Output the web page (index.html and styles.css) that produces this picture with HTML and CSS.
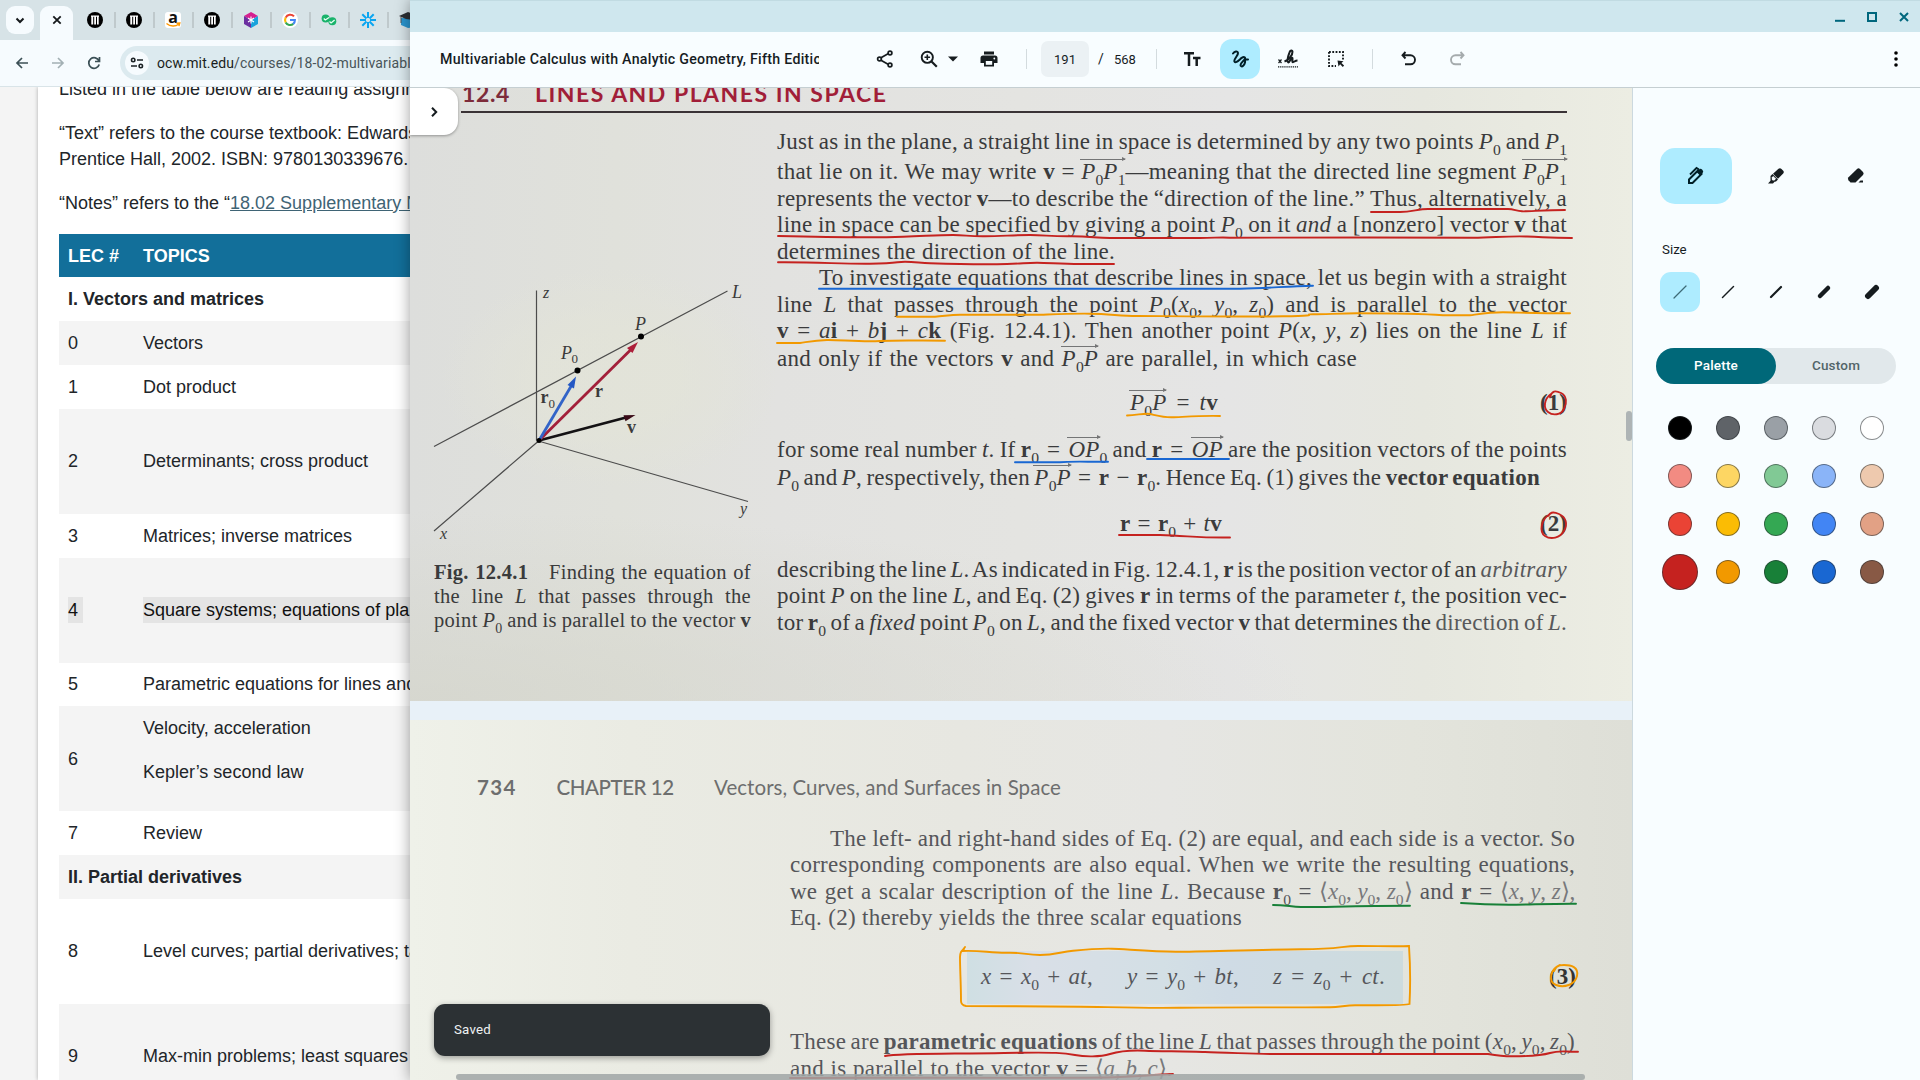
FILE: index.html
```html
<!DOCTYPE html>
<html lang="en">
<head>
<meta charset="utf-8">
<title>Multivariable Calculus with Analytic Geometry, Fifth Edition</title>
<link rel="stylesheet" href="styles.css">
</head>
<body>
<div class="desktop">
  <section class="browser">
    <div class="tabstrip">
      <span class="tab-search"><svg width="28" height="28" viewBox="0 0 28 28"><path d="M10.5 12.5l3.5 3.5 3.5-3.5" fill="none" stroke="#15191b" stroke-width="2"/></svg></span>
      <span class="tab-active"><svg width="33" height="34" viewBox="0 0 33 34"><path d="M13.3 10.3l7.4 7.4M20.700 10.300l-7.400 7.400" stroke="#15191b" stroke-width="1.800"/></svg></span>
      <span class="fav"><svg width="16" height="16" viewBox="0 0 16 16"><circle cx="8" cy="8" r="8"/><path d="M4 3.500h8v1.200H4zM4.300 4h1.900v8.500H4.300zM7.200 4h1.800v8.500H7.200zM10 4h1.700v8.500H10z" fill="#fff"/></svg></span>
      <span class="fav"><svg width="16" height="16" viewBox="0 0 16 16"><circle cx="8" cy="8" r="8"/><path d="M4 3.500h8v1.200H4zM4.300 4h1.900v8.500H4.300zM7.200 4h1.800v8.500H7.200zM10 4h1.700v8.500H10z" fill="#fff"/></svg></span>
      <span class="fav amazon"><b>a</b><svg width="16" height="16" viewBox="0 0 16 16"><path d="M1.500 11.500c4 3.200 9 3.200 12 .8M11.500 11.300l3.300-.2-.9 3" fill="none" stroke="#f90" stroke-width="1.400"/></svg></span>
      <span class="fav"><svg width="16" height="16" viewBox="0 0 16 16"><circle cx="8" cy="8" r="8"/><path d="M4 3.500h8v1.200H4zM4.300 4h1.900v8.500H4.300zM7.200 4h1.800v8.500H7.200zM10 4h1.700v8.500H10z" fill="#fff"/></svg></span>
      <span class="fav"><svg width="16" height="16" viewBox="0 0 16 16"><path d="M8 0l7 4-7 4-7-4z" fill="#d6208f"/><path d="M1 4l7 4v8l-7-4z" fill="#6b2fa0"/><path d="M15 4L8 8v8l7-4z" fill="#19a3dc"/><path d="M8 4.500v7M5 6l6 4M11 6l-6 4" stroke="#fff" stroke-width="1.100"/></svg></span>
      <span class="fav round"><svg width="16" height="16" viewBox="0 0 16 16"><g fill="none" stroke-width="2.100"><path d="M12 4.400A5 5 0 0 0 3.700 5.600" stroke="#ea4335"/><path d="M3.700 5.600a5 5 0 0 0 0 4.800" stroke="#fbbc05"/><path d="M3.700 10.400a5 5 0 0 0 7.600 1.500" stroke="#34a853"/><path d="M8 8h4.900a5 5 0 0 1-1.700 3.900" stroke="#4285f4"/></g></svg></span>
      <span class="fav"><svg width="16" height="16" viewBox="0 0 16 16"><circle cx="4.600" cy="6.500" r="4" fill="#19b36b"/><circle cx="11.300" cy="9.300" r="4" fill="#19b36b"/><path d="M2.800 6.500l1.500 1.500L8 5.500M8.500 9.500l1.600 1.500 3.500-3" fill="none" stroke="#e9fff3" stroke-width="1.300"/></svg></span>
      <span class="fav"><svg width="16" height="16" viewBox="0 0 16 16"><path d="M8 0v6M8 10v6M0 8h6M10 8h6M2.300 2.300l4.200 4.200M9.500 9.500l4.200 4.200M13.700 2.300L9.500 6.500M6.500 9.500l-4.200 4.200" stroke="#0aa5f0" stroke-width="2"/></svg></span>
      <span class="fav"><svg width="16" height="16" viewBox="0 0 16 16"><path d="M2 6h14v9l-7 1-7-3z" fill="#2a95cf"/><path d="M0 4l9-4 7 3v5L7 7z" fill="#2c2f33"/><path d="M2 5v6" stroke="#555" stroke-width="1"/></svg></span>
    </div>
    <div class="navbar">
      <svg width="16" height="16" viewBox="0 0 16 16"><path d="M14 8H3M8 3L3 8l5 5" fill="none" stroke="#3c5056" stroke-width="1.700"/></svg>
      <svg width="16" height="16" viewBox="0 0 16 16"><path d="M2 8h11M8 3l5 5-5 5" fill="none" stroke="#a3b0b4" stroke-width="1.700"/></svg>
      <svg width="16" height="16" viewBox="0 0 16 16"><path d="M13 6A5.300 5.300 0 1 0 13.200 9.500M13.500 2v4.500H9" fill="none" stroke="#3c5056" stroke-width="1.700"/></svg>
      <div class="omnibox">
        <span class="site-info"><svg width="14" height="14" viewBox="0 0 14 14"><g fill="none" stroke="#1b2225" stroke-width="1.600"><circle cx="3.200" cy="4" r="1.700"/><path d="M7 4h6M1 10h6"/><circle cx="10.800" cy="10" r="1.700"/></g></svg></span>
        <span class="url"><b>ocw.mit.edu</b>/courses/18-02-multivariable-calculus</span>
      </div>
    </div>
    <main class="site">
      <div class="sheet">
        <p>Listed in the table below are reading assignments</p>
        <p>“Text” refers to the course textbook: Edwards, Henry<br>Prentice Hall, 2002. ISBN: 9780130339676.</p>
        <p>“Notes” refers to the “<a>18.02 Supplementary Notes</a></p>
        <div class="topics">
          <div class="row head"><span>LEC #</span><span>TOPICS</span></div>
          <div class="row group"><span>I. Vectors and matrices</span></div>
          <div class="row odd"><span>0</span><span>Vectors</span></div>
          <div class="row"><span>1</span><span>Dot product</span></div>
          <div class="row odd tall"><span>2</span><span>Determinants; cross product</span></div>
          <div class="row"><span>3</span><span>Matrices; inverse matrices</span></div>
          <div class="row odd tall"><span><mark>4&nbsp;</mark></span><span><mark>Square systems; equations of planes</mark></span></div>
          <div class="row"><span>5</span><span>Parametric equations for lines and curves</span></div>
          <div class="row odd tall two"><span>6</span><div><p>Velocity, acceleration</p><p>Kepler’s second law</p></div></div>
          <div class="row"><span>7</span><span>Review</span></div>
          <div class="row odd group"><span>II. Partial derivatives</span></div>
          <div class="row tall"><span>8</span><span>Level curves; partial derivatives; tangent plane</span></div>
          <div class="row odd tall"><span>9</span><span>Max-min problems; least squares</span></div>
        </div>
      </div>
    </main>
  </section>

  <section class="viewer">
    <div class="titlebar">
      <svg width="12" height="12" viewBox="0 0 12 12"><path d="M1 9.800h10" stroke="#00677d" stroke-width="2"/></svg>
      <svg width="12" height="12" viewBox="0 0 12 12"><path d="M2 2h8v8H2z" fill="none" stroke="#00677d" stroke-width="2"/></svg>
      <svg width="12" height="12" viewBox="0 0 12 12"><path d="M2 2l8 8M10 2l-8 8" stroke="#00677d" stroke-width="2"/></svg>
    </div>
    <div class="toolbar">
      <h1>Multivariable Calculus with Analytic Geometry, Fifth Edition</h1>
      <span class="ic share"><svg width="20" height="20" viewBox="0 0 20 20"><g fill="none" stroke="#161c1f" stroke-width="1.700"><path d="M5.500 9l8-4.500M5.500 11l8 4.500"/><circle cx="15" cy="4" r="1.900"/><circle cx="15" cy="16" r="1.900"/><circle cx="4.500" cy="10" r="1.900"/></g></svg></span>
      <span class="ic zoom"><svg width="20" height="20" viewBox="0 0 20 20"><g fill="none" stroke="#161c1f"><circle cx="8.300" cy="8.300" r="5.600" stroke-width="1.900"/><path d="M12.500 12.500l5.300 5.300" stroke-width="2.200"/><path d="M8.300 5.500v5.600M5.500 8.300h5.600" stroke-width="1.600"/></g></svg></span>
      <span class="ic caret"><svg width="10" height="6" viewBox="0 0 10 6"><path d="M0 .5h10L5 5.500z" fill="#161c1f"/></svg></span>
      <span class="ic print"><svg width="20" height="20" viewBox="0 0 20 20"><path d="M5 2.500h10v3H5zM4 6.500h12a2.500 2.500 0 0 1 2.500 2.500v5H15v3.500H5V14H1.500V9A2.500 2.500 0 0 1 4 6.500z" fill="#161c1f"/><path d="M6.800 12h6.400v3.800H6.800z" fill="#f8fdff"/><circle cx="15.300" cy="9.500" r=".9" fill="#f8fdff"/></svg></span>
      <i class="sep s1"></i>
      <span class="pageno">191</span><span class="slash">/</span><span class="total">568</span>
      <i class="sep s2"></i>
      <span class="ic tt"><svg width="20" height="18" viewBox="0 0 20 18"><path d="M2 3.300h10M7 3.300V16M11 8h7.500M14.700 8v8" fill="none" stroke="#161c1f" stroke-width="2.500"/></svg></span>
      <span class="draw"><svg width="22" height="22" viewBox="0 0 22 22"><path d="M4 5.500C5.500 3.500 8.700 2.500 9 5s-4.500 6-3.600 8.500c1 2.500 4.600-1.500 7.300-3.600 2.500-1.800 4.500-.5 2.800 1.600-2 2.600-4.800 4.200-3.800 6.200 1.300 2 3.800-.8 4.300-3.200.3-1.400-.4-2.300.8-3H19" fill="none" stroke="#001f27" stroke-width="2" stroke-linecap="round"/></svg></span>
      <span class="ic sign"><svg width="22" height="20" viewBox="0 0 22 20"><path d="M1.500 10.500l3 3.500M4.500 10.500l-3 3.500" stroke="#161c1f" stroke-width="1.200"/><path d="M7.500 12.500c4-1.500 8.200-6.500 8-9.800-.1-2-2.300-1.500-3 .7-1.300 3.400-2.800 9.300-1.300 10 1.600.3 2.600-4.900 4-4.700 1.300.4-.8 4.300.7 4.500 1.400 0 2-1.700 4.600-1.700" fill="none" stroke="#161c1f" stroke-width="2"/><path d="M1 17.800h20" stroke="#161c1f" stroke-width="1.200" stroke-dasharray="1.300 .8"/></svg></span>
      <span class="ic select"><svg width="18" height="18" viewBox="0 0 18 18"><path d="M2 2h14v8M2 2v14h7" fill="none" stroke="#161c1f" stroke-width="1.900" stroke-dasharray="1.800 1.500"/><path d="M10.500 10.500l6 .8-2.100 1.600 2.700 2.700-1.300 1.300-2.700-2.700-1.600 2.200z" fill="#161c1f"/></svg></span>
      <i class="sep s3"></i>
      <span class="ic undo"><svg width="16" height="16" viewBox="0 0 16 16"><path d="M4.500 1L1.500 4.300l3 3.200M1.800 4.300h7.700a4.200 4.200 0 0 1 0 9H4" fill="none" stroke="#161c1f" stroke-width="1.900"/></svg></span>
      <span class="ic redo"><svg width="16" height="16" viewBox="0 0 16 16"><path d="M11.500 1l3 3.300-3 3.200M14.200 4.300H6.500a4.200 4.200 0 0 0 0 9H12" fill="none" stroke="#a5abad" stroke-width="1.900"/></svg></span>
      <span class="ic more"><svg width="6" height="18" viewBox="0 0 6 18"><circle cx="3" cy="3" r="1.800"/><circle cx="3" cy="9" r="1.800"/><circle cx="3" cy="15" r="1.800"/></svg></span>
    </div>
    <div class="work">
      <div class="canvas">
        <article class="page p733">
          <h2><span>12.4</span><span>LINES AND PLANES IN SPACE</span></h2>
          <div class="rule"></div>
          <div class="cols">
            <figure>
              <svg class="plot" width="317" height="276" viewBox="434 284 317 276">
                <g stroke="#4c4c4c" stroke-width="1.200" fill="none"><path d="M536.500 291V441M434 447L727.500 291.500M538 442L434 531.500M540 442L748 502"/></g>
                <path d="M539 441L626 418" stroke="#141214" stroke-width="2.800"/><path d="M635.500 415.500l-12 .200 2 6z" fill="#3a0c18"/>
                <path d="M539 441L632 349" stroke="#a3203a" stroke-width="2.800"/><path d="M638 342.500l-11 6 5.500 5z" fill="#ad1f3a"/>
                <path d="M539 441L571.500 386" stroke="#3264c8" stroke-width="2.800"/><path d="M576 377l-8.500 8.500 6.500 3.500z" fill="#2458c4"/>
                <circle cx="539" cy="441" r="2.500"/><circle cx="577.500" cy="371" r="3"/><circle cx="641" cy="337" r="3"/>
                <g class="lab"><text class="m" x="543" y="298">z</text><text x="732" y="298">L</text><text x="635" y="330">P</text><text x="561" y="359">P</text><text class="m" x="740" y="514">y</text><text class="m" x="440" y="539">x</text></g>
                <g class="lab up"><text class="s" x="571.500" y="363">0</text><text class="s" x="548.500" y="408">0</text><text class="b" x="540.500" y="403">r</text><text class="b" x="595" y="397">r</text><text class="b" x="627" y="433">v</text></g>
              </svg>
              <figcaption>
                <p><b>Fig. 12.4.1</b>&emsp;Finding the equation of</p>
                <p>the line <i>L</i> that passes through the</p>
                <p>point <i>P</i><sub>0</sub> and is parallel to the vector <b>v</b></p>
              </figcaption>
            </figure>
            <div class="prose">
              <p class="l">Just as in the plane, a straight line in space is determined by any two points <i>P</i><sub>0</sub> and <i>P</i><sub>1</sub></p>
              <p class="l g4">that lie on it. We may write <b>v</b> = <span class="vec"><i>P</i><sub>0</sub><i>P</i><sub>1</sub></span>—meaning that the directed line segment <span class="vec"><i>P</i><sub>0</sub><i>P</i><sub>1</sub></span></p>
              <p class="l">represents the vector <b>v</b>—to describe the “direction of the line.” Thus, alternatively, a</p>
              <p class="l">line in space can be specified by giving a point <i>P</i><sub>0</sub> on it <i>and</i> a [nonzero] vector <b>v</b> that</p>
              <p class="l w338">determines the direction of the line.</p>
              <p class="l indent">To investigate equations that describe lines in space, let us begin with a straight</p>
              <p class="l">line <i>L</i> that passes through the point <i>P</i><sub>0</sub>(<i>x</i><sub>0</sub>, <i>y</i><sub>0</sub>, <i>z</i><sub>0</sub>) and is parallel to the vector</p>
              <p class="l"><b>v</b> = <i>a</i><b>i</b> + <i>b</i><b>j</b> + <i>c</i><b>k</b> (Fig. 12.4.1). Then another point <i>P</i>(<i>x</i>, <i>y</i>, <i>z</i>) lies on the line <i>L</i> if</p>
              <p class="l g2 w580">and only if the vectors <b>v</b> and <span class="vec"><i>P</i><sub>0</sub><i>P</i></span> are parallel, in which case</p>
              <div class="eq e1"><p class="l"><span class="vec"><i>P</i><sub>0</sub><i>P</i></span> = <i>t</i><b>v</b></p><b class="no">(1)</b></div>
              <p class="l g20">for some real number <i>t</i>. If <span class="math"><b>r</b><sub>0</sub> = <span class="vec"><i>OP</i></span></span><sub>0</sub> and <span class="math"><b>r</b> = <span class="vec"><i>OP</i></span></span> are the position vectors of the points</p>
              <p class="l g2 w763"><i>P</i><sub>0</sub> and <i>P</i>, respectively, then <span class="math"><span class="vec"><i>P</i><sub>0</sub><i>P</i></span> = <b>r</b> − <b>r</b><sub>0</sub></span>. Hence Eq. (1) gives the <b>vector equation</b></p>
              <div class="eq e2"><p class="l"><b>r</b> = <b>r</b><sub>0</sub> + <i>t</i><b>v</b></p><b class="no">(2)</b></div>
              <p class="l g18">describing the line <i>L</i>. As indicated in Fig. 12.4.1, <b>r</b> is the position vector of an <i class="faded">arbitrary</i></p>
              <p class="l">point <i>P</i> on the line <i>L</i>, and Eq. (2) gives <b>r</b> in terms of the parameter <i>t</i>, the position vec-</p>
              <p class="l">tor <b>r</b><sub>0</sub> of a <i>fixed</i> point <i>P</i><sub>0</sub> on <i>L</i>, and the fixed vector <b>v</b> that determines the <span class="faded">direction of <i>L</i>.</span></p>
            </div>
          </div>
        </article>
        <article class="page p734">
          <header><b>734</b><strong>CHAPTER 12</strong><span>Vectors, Curves, and Surfaces in Space</span></header>
          <div class="prose">
            <p class="l indent">The left- and right-hand sides of Eq. (2) are equal, and each side is a vector. So</p>
            <p class="l">corresponding components are also equal. When we write the resulting equations,</p>
            <p class="l">we get a scalar description of the line <i>L</i>. Because <b>r</b><sub>0</sub> = <span class="pale">⟨<i>x</i><sub>0</sub>, <i>y</i><sub>0</sub>, <i>z</i><sub>0</sub>⟩</span> and <b>r</b> = <span class="pale">⟨<i>x</i>, <i>y</i>, <i>z</i>⟩,</span></p>
            <p class="l w452">Eq. (2) thereby yields the three scalar equations</p>
            <div class="eq e3">
              <div class="boxed"><p class="l"><i>x</i> = <i>x</i><sub>0</sub> + <i>at</i>,</p><p class="l"><i>y</i> = <i>y</i><sub>0</sub> + <i>bt</i>,</p><p class="l"><i>z</i> = <i>z</i><sub>0</sub> + <i>ct</i>.</p></div>
              <b class="no">(3)</b>
            </div>
            <p class="l g25">These are <b>parametric equations</b> of the line <i>L</i> that passes through the point (<i>x</i><sub>0</sub>, <i>y</i><sub>0</sub>, <i>z</i><sub>0</sub>)</p>
            <p class="l w380">and is parallel to the vector <b>v</b> = <span class="pale">⟨<i>a</i>, <i>b</i>, <i>c</i>⟩.</span></p>
          </div>
        </article>
        <svg class="ink" width="1222" height="992" viewBox="410 88 1222 992">
          <g stroke="#c5221f">
            <path d="M1371 212H1400C1412 212 1418 209 1428 209H1508C1514 209 1516 211 1522 211.300S1545 210 1565 210"/>
            <path d="M778 236C820 237 870 238 903 236.700S940 235 953 235 968 236.500 985 236.300 1015 235 1030 235 1050 236.500 1070 236.300 1095 238 1110 238H1200C1215 238 1220 237 1230 237.700S1400 237 1473 237.700C1500 237 1510 236 1527 236.500S1550 238 1572 238"/>
            <path d="M778 262.300C820 262 840 264 870 263.700S895 261.700 905 261.700 920 263 930 263.300 990 264.500 1007 264 1025 262.700 1037 262.700 1060 264 1080 264H1114"/>
            <path d="M1119 535H1160C1190 536 1200 538 1230 537.500"/>
            <path d="M885 1056C900 1053 950 1054 1004 1053S1065 1053 1075 1055 1100 1057 1110 1054 1130 1050 1145 1050.700 1190 1051 1205 1052 1240 1053 1270 1054H1488C1500 1056 1505 1056.300 1512 1056.300S1540 1056 1550 1053 1565 1052 1578 1051.700"/>
            <path d="M790 1078C900 1077 1080 1079 1120 1077S1150 1075 1173 1074"/>
            <path d="M1551 394C1544 399 1543 408 1548 412S1561 415 1564 409 1567 396 1561 393 1552 391 1550 397"/>
            <path d="M1550 514C1541 519 1539 532 1545 536S1560 538 1564 531 1566 517 1559 514 1550 513 1548 516"/>
          </g>
          <g stroke="#1967d2"><path d="M819 288.700H1240C1270 288.500 1285 286 1313 285.700M1015 462.300H1060C1070 461 1090 462 1108 461.700M1147 459H1229"/></g>
          <g stroke="#f29900">
            <path d="M897 316.700H935C945 316 950 314.700 960 314.700H1040C1060 314 1070 313.500 1090 313.700S1120 316 1137 316 1240 317 1283 316.300 1300 314.300 1313 314.300 1340 313.300 1357 313.300 1425 314 1443 315.300H1470C1480 314 1490 312.300 1503 312.300S1530 313.300 1570 313.300"/>
            <path d="M777 343H800C810 341.500 815 340.300 827 340S860 342 880 341 920 340.700 945 340.700"/>
            <path d="M1127 415.500C1138 415 1145 413 1150 414S1163 417.500 1172 417.300 1200 415.500 1220 416"/>
            <path d="M965 947L962 951C980 950 990 953 1008 952.700S1025 955 1040 955 1060 952 1073 950.700 1100 948.500 1112 948.700 1150 951.700 1176 951.700 1260 949.500 1301 949.300 1340 946 1358 946 1400 946.500 1409 946Q1411 975 1409.500 1004C1405 1006 1365 1005 1355 1005.300S1340 1007 1330 1007.300 1220 1007 1180 1007.700 1100 1006.700 1080 1006.700 1000 1006 966 1006Q961 1005 961 1001C961 985 960 970 960 957Q960 951 964 949"/>
            <path d="M1560 965C1550 969 1548 982 1556 985S1575 985 1577 976 1571 965 1564 965 1556 967 1554 971"/>
          </g>
          <g stroke="#188038"><path d="M1273 905C1285 905 1290 906.500 1301 907S1350 906 1410 905.700M1461 903C1475 904 1490 904.700 1509 904.700S1550 903.500 1576 903.700"/></g>
        </svg>
        <span class="drawer"><svg width="12" height="12" viewBox="0 0 12 12"><path d="M4 1.800L8.200 6 4 10.200" fill="none" stroke="#161c1f" stroke-width="2"/></svg></span>
        <div class="toast">Saved</div>
        <i class="vbar"></i><i class="hbar"></i>
      </div>
      <aside class="panel">
        <div class="tools">
          <span class="on"><svg width="20" height="20" viewBox="0 0 20 20"><path d="M3 17v-3.500L12 4.500l3.500 3.500-9 9z" fill="none" stroke="#001f27" stroke-width="2"/><path d="M10.500 6L13 3.500q1.500-1.500 3.300.3 1.800 1.700.3 3.300L14 9.500z" fill="#001f27"/><path d="M4 8.500l6.500-6.500 2.500 1.500" fill="none" stroke="#001f27" stroke-width="1.800"/></svg></span>
          <span><svg width="20" height="20" viewBox="0 0 20 20"><path d="M12.500 2.800q1.500-1.300 3 .2l1.500 1.500q1.500 1.500.2 3L12 12.700l-5-5zM4.500 10l2-2 5.500 5.500-2 2-1.500.2L7 17.500H2l2.500-2.700z" fill="#161c1f"/><path d="M7.200 10L10 12.800 8.300 14.500H6.800l-1-1v-2z" fill="#f8fdff"/></svg></span>
          <span><svg width="20" height="20" viewBox="0 0 20 20"><path d="M11 3q1.500-1.300 3 0l3 3q1.300 1.500 0 3l-7.500 7.500h-5L2.500 14.200q-1.200-1.500 0-3z" fill="#161c1f"/><path d="M12.500 16.500l2-2H17v2z" fill="#161c1f"/></svg></span>
        </div>
        <h3>Size</h3>
        <div class="sizes">
          <span class="on"><svg width="16" height="16"><path d="M2 14L14 2" stroke-width="1.200"/></svg></span>
          <span><svg width="16" height="16"><path d="M2.500 13.500l11-11" stroke-width="1.500"/></svg></span>
          <span><svg width="16" height="16"><path d="M3 13L13 3" stroke-width="2.200"/></svg></span>
          <span><svg width="16" height="16"><path d="M4 12l8-8" stroke-width="4.500"/></svg></span>
          <span><svg width="16" height="16"><path d="M4 12l8-8" stroke-width="6"/></svg></span>
        </div>
        <div class="seg"><b>Palette</b><span>Custom</span></div>
        <div class="swatches">
          <i style="background:#000"></i><i style="background:#5f6368"></i><i style="background:#9aa0a6"></i><i style="background:#dadce0"></i><i style="background:#fff"></i>
          <i style="background:#f28b82"></i><i style="background:#fdd663"></i><i style="background:#81c995"></i><i style="background:#8ab4f8"></i><i style="background:#eec9ae"></i>
          <i style="background:#ea4335"></i><i style="background:#fbbc04"></i><i style="background:#34a853"></i><i style="background:#4285f4"></i><i style="background:#e2a185"></i>
          <i class="big" style="background:#c5221f"></i><i style="background:#f29900"></i><i style="background:#188038"></i><i style="background:#1967d2"></i><i style="background:#885945"></i>
        </div>
      </aside>
    </div>
  </section>
</div>
</body>
</html>
```
FILE: styles.css
```css
* { box-sizing: border-box; }
body, p, h1, h2, h3, figure { margin: 0; }
body { width: 1920px; height: 1080px; overflow: hidden; font-family: Roboto, sans-serif; }
svg { display: block; flex: none; }
.desktop { position: relative; width: 1920px; height: 1080px; overflow: hidden; }

/* course page window */
.browser { width: 410px; height: 1080px; overflow: hidden; background: #f6fbfe; display: flex; flex-direction: column; }
.tabstrip { flex: none; height: 40px; width: 440px; background: #d7e3e7; display: flex; align-items: flex-start; padding: 6px 0 0 6px; }
.tab-search { width: 28px; height: 28px; border-radius: 9px; background: #f6fbfe; }
.tab-active { width: 33px; height: 34px; margin: 0 14px 0 6px; border-radius: 9px 9px 0 0; background: #f6fbfe; }
.fav { width: 16px; height: 16px; margin: 6px 23px 0 0; position: relative; flex: none; }
.fav::after { content: ""; position: absolute; left: 27px; top: 0; width: 2px; height: 16px; background: #bfc9cc; }
.fav.round svg { background: #fff; border-radius: 8px; }
.fav.amazon { background: #fff; border-radius: 3px; }
.fav.amazon svg { position: absolute; left: 0; top: 0; }
.fav.amazon b { display: block; font: 700 16px/11px "Open Sans", sans-serif; text-align: center; color: #111; }
.navbar { flex: none; height: 47px; width: 460px; display: flex; align-items: center; padding-left: 14px; border-bottom: 1px solid #d9e4e8; }
.navbar > svg { margin-right: 20px; }
.omnibox { width: 340px; height: 34px; margin-left: -2px; border-radius: 17px; background: #dceaef; display: flex; align-items: center; padding-left: 5px; flex: none; }
.site-info { flex: none; width: 24px; height: 24px; border-radius: 12px; background: #f6fbfe; display: flex; align-items: center; justify-content: center; margin-right: 8px; }
.url { font-size: 14px; letter-spacing: .13px; color: #485458; white-space: nowrap; }
.url b { font-weight: 400; color: #181e20; }
.site { flex: 1; background: #f4f4f4; padding-left: 38px; overflow: hidden; }
.sheet { width: 500px; height: 100%; background: #fff; box-shadow: 0 0 4px rgba(0,0,0,.3); padding-left: 21px; font: 18px/26px "Liberation Sans", Arial, sans-serif; color: #212529; white-space: nowrap; overflow: hidden; }
.sheet > p { margin-bottom: 18px; }
.sheet > p:first-child { margin-top: -11px; }
.sheet a { color: #3f6475; text-decoration: underline; }
.topics { margin-top: -.4px; }
.row { height: 43.8px; display: grid; grid-template-columns: 75px 1fr; align-items: center; padding: 0 0 0 9px; }
.row.group { display: flex; font-weight: 700; }
.row.head { background: #126f9a; color: #fff; font-weight: 700; }
.row.odd { background: #f4f4f4; }
.row.tall { height: 105px; }
.two div { align-self: start; padding-top: 8.9px; }
.two p + p { margin-top: 18px; }
mark { background: #e4e4e4; color: #111; display: inline-block; height: 26px; }

/* document viewer window */
.viewer { position: absolute; left: 410px; top: 0; width: 1510px; height: 1080px; box-shadow: 0 0 14px rgba(0,0,0,.38); display: flex; flex-direction: column; background: #f8fdff; }
.titlebar { height: 32px; background: #cfe7ee; display: flex; justify-content: flex-end; align-items: center; gap: 20px; padding-right: 10px; border-top: 1px solid #c1dbe2; }
.toolbar { height: 56px; border-bottom: 1px solid #c5cfd2; display: flex; align-items: center; padding: 0 21px 1px 30px; color: #161c1f; font-size: 14px; }
.toolbar h1 { width: 379px; overflow: hidden; white-space: nowrap; font: 500 14.2px/20px Roboto, sans-serif; letter-spacing: .28px; }
.ic { display: flex; }
.share { margin-left: 56px; }
.zoom { margin-left: 24px; }
.caret { margin-left: 9px; }
.print { margin-left: 21px; }
.sep { width: 1px; height: 20px; background: #d3dbde; }
.s1 { margin: 0 14px 0 27px; }
.pageno { width: 48px; height: 36px; border-radius: 7px; background: #ebf1f4; display: flex; align-items: center; justify-content: center; }
.pageno, .total { font-size: 13px; }
.slash { margin-left: 9px; width: 8px; }
.total { margin-left: 8px; width: 24px; }
.s2 { margin: 0 25px 0 18px; }
.draw { width: 40px; height: 40px; margin: 0 17px 0 18px; border-radius: 12px; background: #aeecff; display: flex; align-items: center; justify-content: center; }
.select { margin: 0 27px 0 28px; }
.undo { margin-left: 28px; }
.redo { margin-left: 32px; }
.more { margin-left: auto; }
.work { flex: 1; display: flex; min-height: 0; }
.canvas { position: relative; width: 1222px; height: 992px; overflow: hidden; background: #e8f1f8; }

.page { width: 1222px; overflow: hidden; font: 23px/26.5px "Liberation Serif", "Times New Roman", serif; color: #3a3b3c; }
.p733 { height: 613px; margin-bottom: 18.700px; background: radial-gradient(ellipse 900px 190px at 0 100%, rgba(212,213,203,.75), rgba(212,213,203,0)), radial-gradient(ellipse 170px 110px at 200px 290px, rgba(227,228,216,.7) 40%, rgba(227,228,216,0)), linear-gradient(90deg, #dddedc, #e0e1db 17%, #e2e2e0 30%, #e4e4e1 50%, #e5e5e5 67%, #e6e7df 83%, #ecede3); }
.p734 { height: 361px; color: #55565a; background: linear-gradient(90deg, #eff1e9, #eaebe3 18%, #e7e7e1 45%, #e6e6e3 62%, #e3e4dc 82%, #dedfd7); }
h2 { display: flex; margin: -9.500px 0 4.500px 52px; font: 700 23px/28px Lato, sans-serif; color: #a11e38; }
h2 span { letter-spacing: 1.5px; white-space: nowrap; }
h2 span:first-child { width: 73px; color: #7d2b3a; letter-spacing: .6px; }
.rule { height: 2px; width: 1106px; margin: 0 0 .5px 51px; background: #3a3336; }
.cols { display: grid; grid-template-columns: 317px 790px; column-gap: 26px; padding: 15px 0 0 24px; }
.plot { margin-top: 154.500px; height: 277px; overflow: visible; }
.lab { font: italic 18px "Liberation Serif", serif; fill: #3a3a3a; }
.lab.up { font-style: normal; }
.lab .m { font-size: 16px; }
.lab .s { font-size: 13px; }
.lab .b { font-weight: 700; }
figcaption { font-size: 20.500px; line-height: 24.200px; }
figcaption p, .l { text-align: justify; text-align-last: justify; white-space: nowrap; }
figcaption p { letter-spacing: .3px; word-spacing: -2px; }
.l { height: 26.500px; letter-spacing: .25px; word-spacing: -3px; }
.math { word-spacing: 0; }
sub { font-size: .68em; line-height: 0; vertical-align: -6px; letter-spacing: 0; }
.vec { position: relative; display: inline-block; line-height: 26px; word-spacing: 0; }
.vec::before { content: ""; position: absolute; left: -1px; right: 0; top: 0; height: 1px; background: #747576; }
.vec::after { content: ""; position: absolute; right: -1px; top: -2px; border: solid transparent; border-width: 2.500px 0 2.500px 4px; border-left-color: #747576; }
.indent { padding-left: 42px; }
.p734 .indent { padding-left: 40px; }
.g4 { margin-top: 4.200px; }
.g2 { margin-top: 1.500px; }
.g18 { margin-top: 19.600px; }
.g20 { margin-top: 20.600px; }
.g25 { margin-top: 25.400px; }
.w338 { width: 338px; }
.w580 { width: 580px; }
.w763 { width: 763px; }
.w452 { width: 452px; }
.w380 { width: 382px; }
.pale { color: #77787b; letter-spacing: -.2px; word-spacing: -4px; }
.faded { color: #58595b; }
.eq { display: flex; justify-content: space-between; }
.eq .no { width: 27px; }
.e1 { margin-top: 17.600px; padding-left: 353px; }
.e1 .l { width: 88px; }
.e2 { margin-top: 19px; padding-left: 343px; }
.e2 .l { width: 102px; }
.p734 header { display: flex; height: 106.200px; padding: 54.500px 0 0 67px; font: 20.500px/26px Lato, sans-serif; color: #6d6e6e; }
.p734 header b { width: 79.500px; letter-spacing: 1.300px; }
.p734 header strong { width: 157.500px; font-weight: 500; letter-spacing: -.45px; }
.p734 header span { letter-spacing: .05px; }
.p734 .prose { width: 785px; margin-left: 380px; }
.e3 { align-items: center; margin-top: 19px; padding-left: 177px; }
.boxed { width: 436px; height: 53px; padding: 13px 18px 0 14px; background: linear-gradient(90deg, #cfdfe3, #d9dfe7 15%, #d3dfe5 45%, #cfdbe5 60%, #cddbdd); display: flex; justify-content: space-between; }
.boxed .l { width: 112px; }
.e3 .no { color: #333; width: 26px; }

.ink { position: absolute; left: 0; top: 0; fill: none; stroke-width: 1.900; stroke-linecap: round; }
.drawer { position: absolute; left: 0; top: 0; width: 48px; height: 47px; border-radius: 0 14px 14px 0; background: #fff; box-shadow: 0 1px 3px rgba(0,0,0,.35); display: flex; align-items: center; padding-left: 18px; }
.toast { position: absolute; left: 24px; top: 916px; width: 336px; height: 52px; border-radius: 11px; background: #2c3134; color: #eff1f3; font-size: 13.300px; line-height: 52px; letter-spacing: .2px; padding-left: 20px; box-shadow: 0 2px 6px rgba(0,0,0,.35); }
.vbar { position: absolute; right: 0; top: 323px; width: 6px; height: 30px; border-radius: 3px; background: #aeb4b5; }
.hbar { position: absolute; left: 46px; bottom: 0; width: 1129px; height: 6px; border-radius: 3px; background: rgba(160,166,166,.85); }

/* drawing options */
.panel { flex: 1; border-left: 1px solid #ccd9df; padding: 60px 23px 0 23px; background: #f8fdff; color: #161c1f; }
.tools { display: flex; gap: 8px; padding-left: 4px; }
.tools span { width: 72px; height: 56px; border-radius: 15px; display: flex; align-items: center; justify-content: center; }
.on { background: #aeecff; }
h3 { margin: 35px 0 12px 6px; font: 400 13.300px/21px Roboto, sans-serif; }
.sizes { display: flex; gap: 8px; padding-left: 4px; }
.sizes span { width: 40px; height: 40px; border-radius: 11px; display: flex; align-items: center; justify-content: center; }
.sizes path { stroke: #161c1f; stroke-linecap: round; }
.sizes .on path { stroke: #3d6a76; }
.seg { display: flex; width: 240px; height: 36px; margin-top: 36px; border-radius: 18px; background: #e1e8eb; font: 500 13.500px/35px Roboto, sans-serif; letter-spacing: .2px; text-align: center; }
.seg b { width: 120px; border-radius: 18px; background: #006879; color: #fff; font-weight: 500; }
.seg span { width: 120px; color: #526468; }
.swatches { display: grid; grid-template-columns: repeat(5, 48px); grid-auto-rows: 48px; margin-top: 20px; place-items: center; }
.swatches i { width: 24px; height: 24px; border-radius: 50%; border: 1px solid rgba(40,45,50,.55); }
.swatches .big { width: 36px; height: 36px; }
```
